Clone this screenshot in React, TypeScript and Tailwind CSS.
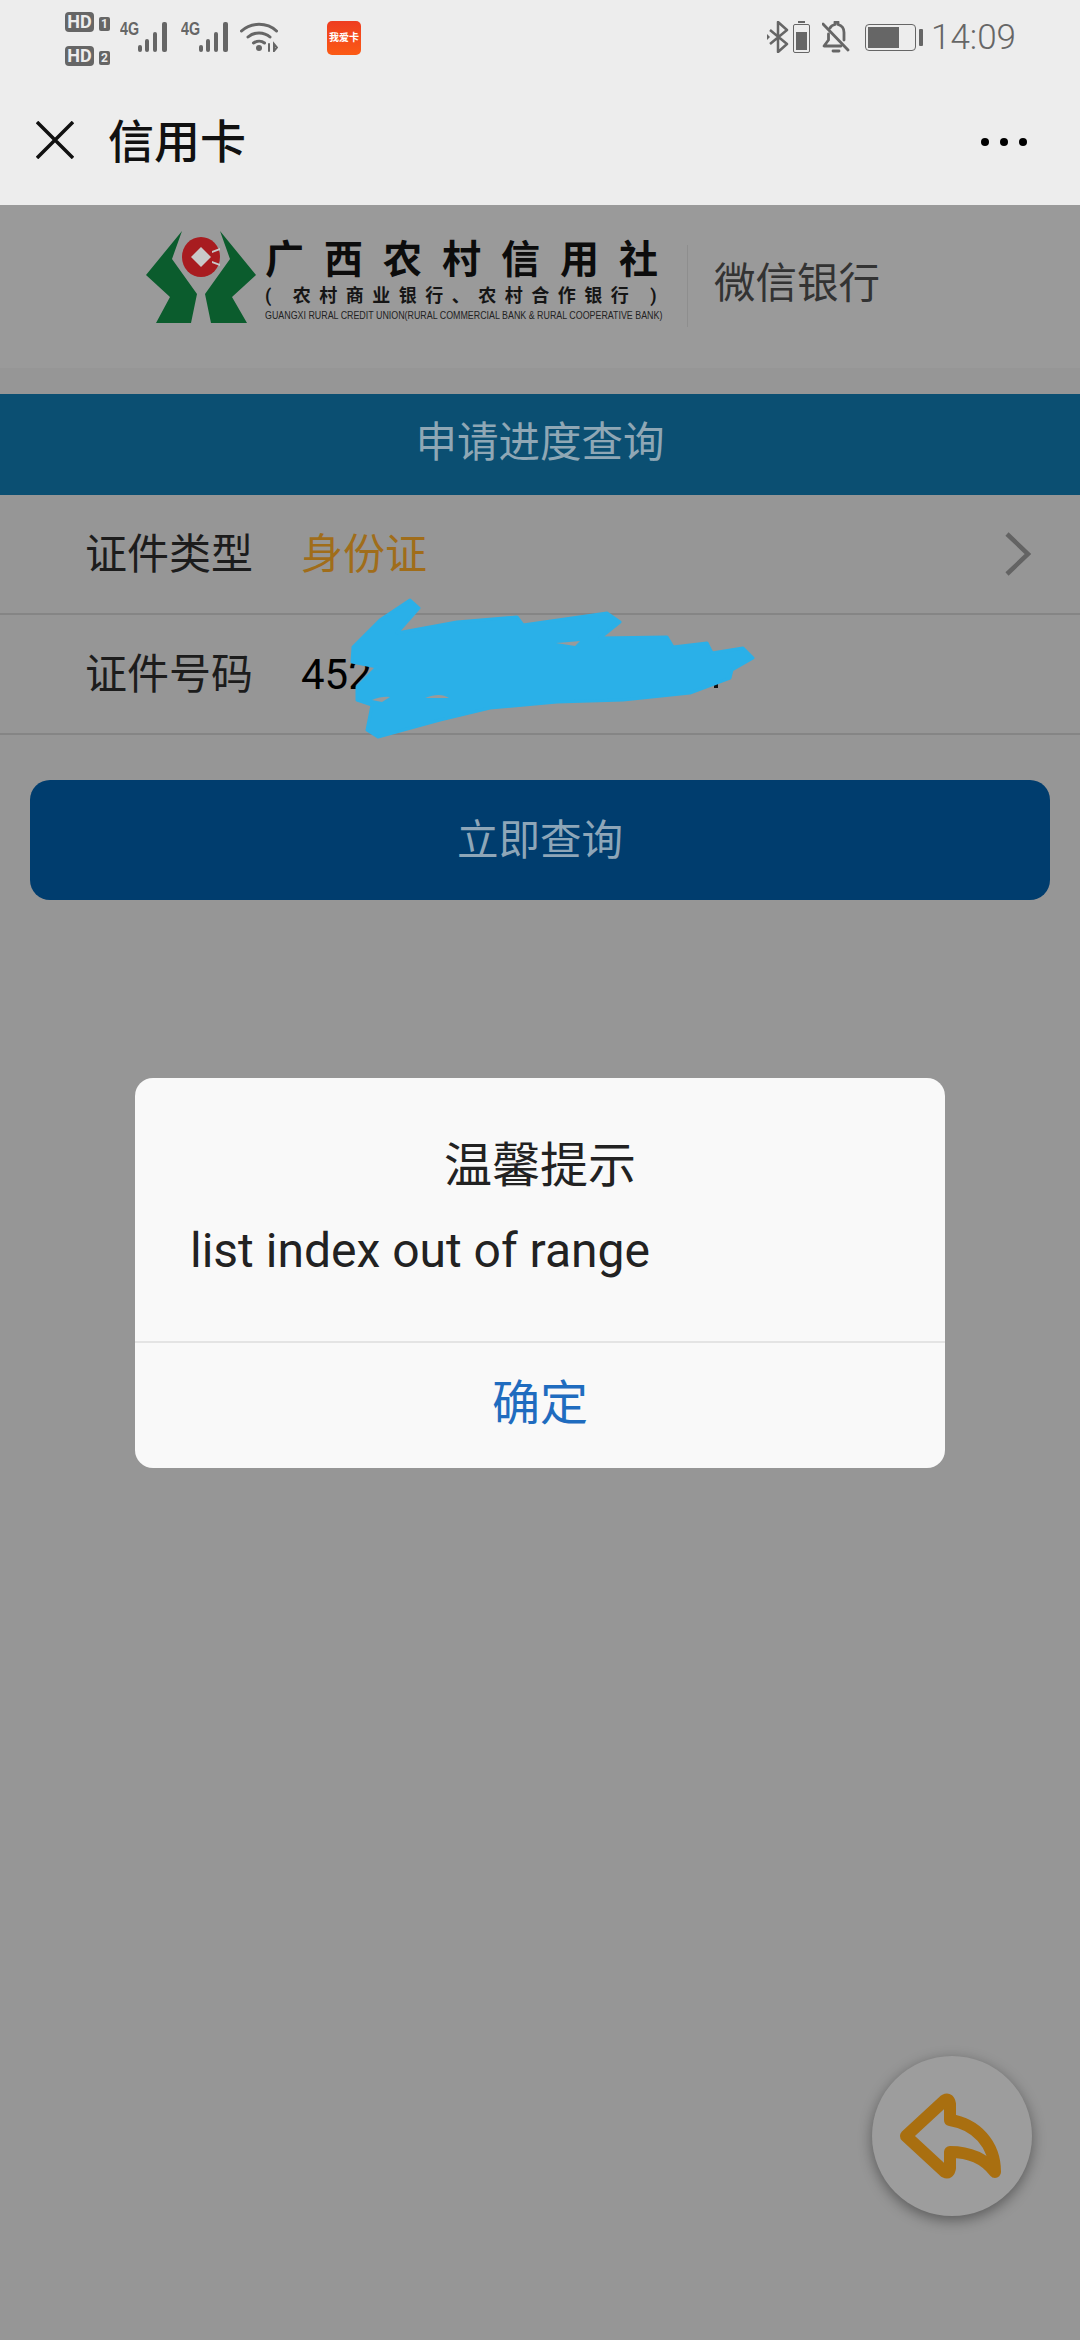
const cjk = "font-['Roboto','Noto_Sans_CJK_SC',sans-serif]";

const Signal = () => (
  <svg width="33" height="30" viewBox="0 0 33 30" className="text-[#666]" fill="currentColor">
    <rect x="0" y="23" width="4" height="7" rx="2" />
    <rect x="7" y="17" width="4" height="13" rx="2" />
    <rect x="15" y="10" width="4" height="20" rx="2" />
    <rect x="24" y="0" width="5" height="30" rx="2" />
  </svg>
);

const HdBadge = ({ n }: { n: string }) => (
  <div className="flex items-center gap-[5px]">
    <span className="w-[29px] h-[20px] rounded-[4px] bg-[#666] text-[#ededed] text-[18px] leading-[20px] font-bold text-center font-['Roboto',sans-serif]">
      HD
    </span>
    <span className="w-[11px] h-[14px] mt-1 rounded-[2px] bg-[#666] text-[#ededed] text-[12px] leading-[14px] font-bold text-center font-['Roboto',sans-serif]">
      {n}
    </span>
  </div>
);

const Net = () => (
  <div className="flex items-start">
    <span className="text-[#666] text-[19px] leading-[16px] font-bold font-['Liberation_Sans',sans-serif] w-[18px] mt-[-1px] scale-x-75 origin-left whitespace-nowrap">
      4G
    </span>
    <Signal />
  </div>
);

const StatusBar = () => (
  <div className="flex items-center h-[70px] pl-[65px] pr-[64px]">
    <div className="flex flex-col gap-[14px] mt-[7px]">
      <HdBadge n="1" />
      <HdBadge n="2" />
    </div>
    <div className="flex gap-[10px] ml-[10px] mt-[4px]">
      <Net />
      <Net />
    </div>
    <svg width="38" height="30" viewBox="0 0 38 30" fill="none" stroke="#666" strokeWidth="3" strokeLinecap="round" className="ml-[8px] mt-[4px]">
      <path d="M1.5 9C11 0 27 0 36.5 9" />
      <path d="M8 15c6-5.500 16-5.500 22 0" />
      <path d="M13.500 21c3.500-2.500 8-2.500 11 0" />
      <circle cx="19" cy="26" r="3" fill="#666" stroke="none" />
      <path d="M29 22v7M34 22l3 3.500-3 3.500z" strokeWidth="2" />
    </svg>
    <div className="ml-[49px] mt-[6px] w-[34px] h-[34px] rounded-[5px] bg-gradient-to-b from-[#ee3c20] to-[#fb5a14] flex flex-col items-center justify-center">
      <span className={`text-white text-[10px] leading-[10px] font-bold whitespace-nowrap ${cjk}`}>我爱卡</span>
    </div>
    <div className="flex-1" />
    <svg width="24" height="32" viewBox="0 0 24 32" fill="none" stroke="#666" strokeWidth="2.500" strokeLinejoin="round" className="mt-[4px]">
      <path d="M3 9l17 14-9 8V1l9 8L3 23" />
      <path d="M0 13l3 3-3 3z" fill="#666" stroke="none" />
    </svg>
    <div className="relative ml-[2px] w-[17px] h-[29px] mt-[7px] border-[1.5px] border-[#666] rounded-[2px] p-[2px] flex items-end">
      <div className="absolute top-[-4px] left-[4px] w-[7px] h-[2px] bg-[#666]" />
      <div className="w-full h-[18px] bg-[#666]" />
    </div>
    <svg width="28" height="32" viewBox="0 0 28 32" fill="none" stroke="#666" strokeWidth="2.800" strokeLinecap="round" strokeLinejoin="round" className="ml-[12px] mt-[4px]">
      <path d="M8 7c1-2 3-3 5-3.500V1h3v2.500c4 1 6 4 6 8V19" />
      <path d="M6.500 13v6L2 25h17" />
      <path d="M1 3l25 26" />
      <path d="M11 30h6" />
    </svg>
    <div className="flex items-center ml-[15px] mt-[4px]">
      <div className="w-[51px] h-[27px] border-[1.5px] border-[#666] rounded-[4px] p-[2px]">
        <div className="w-[31px] h-full bg-[#666]" />
      </div>
      <div className="w-[4px] h-[17px] ml-[3px] rounded-[1px] bg-[#666]" />
    </div>
    <span className="ml-[8px] mt-[5px] text-[#666] text-[35px] leading-none font-light font-['Roboto',sans-serif]">14:09</span>
  </div>
);

const NavBar = () => (
  <div className="flex items-center h-[135px] pt-[8px] pl-[36px] pr-[53px]">
    <svg width="38" height="38" viewBox="0 0 38 38" stroke="#111" strokeWidth="3.500" className="mt-[-3px]">
      <path d="M1 1l36 36M37 1L1 37" />
    </svg>
    <span className={`ml-[34px] text-[46px] leading-none font-medium text-[#111] ${cjk}`}>信用卡</span>
    <div className="flex-1" />
    <div className="flex gap-[11px]">
      <div className="w-2 h-2 rounded-full bg-black" />
      <div className="w-2 h-2 rounded-full bg-black" />
      <div className="w-2 h-2 rounded-full bg-black" />
    </div>
  </div>
);

const Emblem = () => (
  <svg width="110" height="93" viewBox="0 0 110 93" className="shrink-0">
    <path d="M36 0L0 44L24 66L10 92H45L51 63L26 28Z" fill="#0b5c2d" />
    <path d="M74 0L110 44L86 66L101 92H65L59 63L84 28Z" fill="#0b5c2d" />
    <ellipse cx="55" cy="26" rx="19" ry="20" fill="#a81c20" />
    <path d="M55 16l10 10-10 10-10-10z" fill="#c9c9c9" />
    <path d="M66 20l8-3v2l-8 3zM66 32l8 3v-2l-8-3z" fill="#c9c9c9" />
  </svg>
);

const Logo = () => (
  <div className="flex items-start h-[163px] pt-[26px] pl-[146px] bg-[#9a9a9a]">
    <Emblem />
    <div className="ml-[9px] w-[396px] flex flex-col shrink-0">
      <span className={`text-[39px] leading-[43px] mt-[8px] font-bold text-[#0c0c0c] tracking-[20px] whitespace-nowrap ${cjk}`}>广西农村信用社</span>
      <span className={`text-[18px] leading-[22px] mt-[3px] font-bold text-[#151515] tracking-[8.500px] whitespace-nowrap ${cjk}`}>( 农村商业银行、农村合作银行 )</span>
      <span className="text-[11px] leading-[10px] mt-[3px] text-[#222] whitespace-nowrap origin-left scale-x-[0.807] font-['Liberation_Sans',sans-serif]">
        GUANGXI RURAL CREDIT UNION(RURAL COMMERCIAL BANK &amp; RURAL COOPERATIVE BANK)
      </span>
    </div>
    <div className="ml-[26px] mt-[14px] w-px h-[82px] bg-[#8e8e8e] shrink-0" />
    <span className={`ml-[26px] mt-[28px] text-[41.500px] leading-[50px] text-[#333] whitespace-nowrap ${cjk}`}>微信银行</span>
  </div>
);

const FormRow = ({ label, children }: { label: string; children: React.ReactNode }) => (
  <div className={`flex items-center h-[120px] pl-[85px] pr-[48px] border-b-2 border-[#858585] text-[42px] ${cjk}`}>
    <span className="w-[216px] text-[#1c1c1c]">{label}</span>
    {children}
  </div>
);

// scribble hiding the id number, drawn by hand on the screenshot
const Redaction = () => (
  <svg className="absolute left-0 top-[595px]" width="1080" height="150" viewBox="0 595 1080 150">
    <rect x="714" y="682" width="4" height="6" fill="#111" />
    <path
      d="M410 600L419 608L397 633L457 622L517 617L523 625L607 613L620 622L600 638L667 637L673 647L707 643L712 653L743 648L753 658L732 670L730 678L690 693L623 700L557 702L490 708L440 720L378 737L367 730L372 705L357 700L357 687L377 667L352 662L353 647L380 620Z"
      fill="#2ab0e8"
      stroke="#2ab0e8"
      strokeWidth="3"
      strokeLinejoin="round"
    />
    <path d="M425 698q15-6 24 0z" fill="#9a9a9a" />
    <path d="M372 700q10-4 18-3l-8 5z" fill="#9a9a9a" />
    <path d="M556 643q14-1 24-2l-5 5z" fill="#9a9a9a" />
  </svg>
);

const Dialog = () => (
  <div className="absolute left-[135px] top-[1078px] w-[810px] h-[390px] rounded-[18px] bg-[#f9f9f9] flex flex-col">
    <div className={`flex-1 px-[55px] pt-[56px] text-[#222] ${cjk}`}>
      <div className="text-[48px] leading-[64px] text-center">温馨提示</div>
      <div className="text-[48px] leading-[64px] mt-[21px] font-['Roboto',sans-serif]">list index out of range</div>
    </div>
    <div className={`h-[127px] pb-[4px] border-t-2 border-[#e4e4e4] flex items-center justify-center text-[48px] text-[#1f6cbf] ${cjk}`}>
      确定
    </div>
  </div>
);

const BackButton = () => (
  <div className="absolute left-[872px] top-[2056px] w-[160px] h-[160px] rounded-full bg-[#9d9d9d] shadow-[0_4px_14px_rgba(0,0,0,0.4)] flex items-center justify-center">
    <svg width="104" height="88" viewBox="0 0 104 88" fill="none" stroke="#a96f10" strokeWidth="12" strokeLinejoin="round" strokeLinecap="round">
      <path d="M6 44L45 8Q49 6 50 12V28C76 32 95 52 95 80C84 66 70 60 50 60V76Q49 82 45 80Z" />
    </svg>
  </div>
);

export default function App() {
  return (
    <div className={`relative w-[1080px] h-[2340px] overflow-hidden bg-[#969696] ${cjk}`}>
      <div className="h-[205px] bg-[#ededed]">
        <StatusBar />
        <NavBar />
      </div>
      <Logo />
      <div className="h-[26px]" />
      <div className={`h-[101px] pb-[3px] bg-[#0b4f72] flex items-center justify-center text-[41.500px] text-[#8fa7b5] ${cjk}`}>
        申请进度查询
      </div>
      <FormRow label="证件类型">
        <span className="text-[#a06d1a]">身份证</span>
        <div className="flex-1" />
        <svg width="28" height="44" viewBox="0 0 28 44" fill="none" stroke="#636363" strokeWidth="4.500">
          <path d="M3 2l21 20L3 42" />
        </svg>
      </FormRow>
      <FormRow label="证件号码">
        <span className="text-black font-['Roboto',sans-serif]">452</span>
      </FormRow>
      <div className="px-[30px] pt-[45px]">
        <div className={`h-[120px] pt-[3px] rounded-[20px] bg-[#003d6e] flex items-center justify-center text-[41.500px] text-[#8ea6b8] ${cjk}`}>
          立即查询
        </div>
      </div>
      <Redaction />
      <Dialog />
      <BackButton />
    </div>
  );
}
